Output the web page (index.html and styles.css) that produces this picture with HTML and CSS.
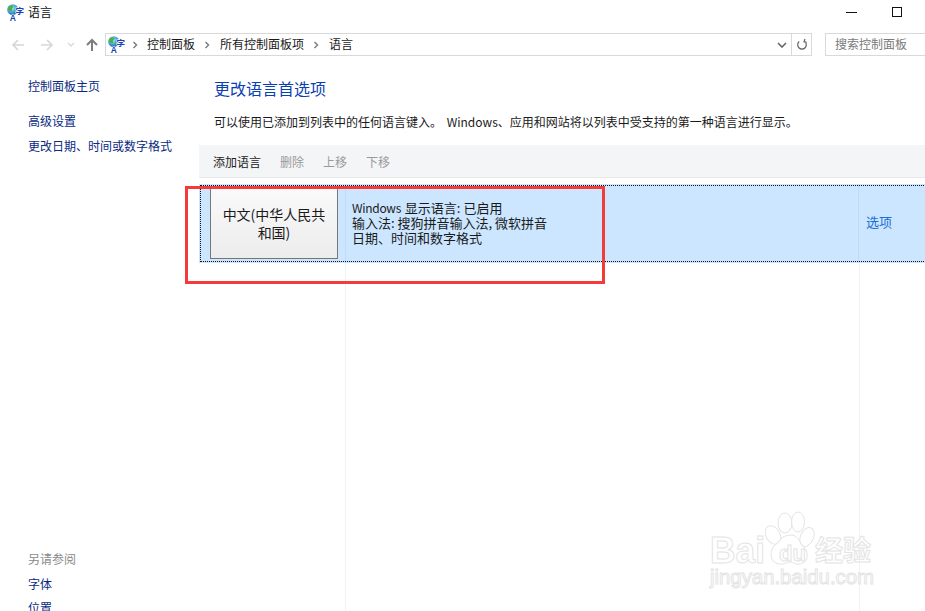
FILE: index.html
```html
<!DOCTYPE html>
<html lang="zh-CN">
<head>
<meta charset="utf-8">
<title>语言</title>
<link rel="stylesheet" href="styles.css">
</head>
<body>
<svg class="defs" width="0" height="0" aria-hidden="true">
  <defs>
    <radialGradient id="globe" cx="40%" cy="35%" r="70%">
      <stop offset="0" stop-color="#c4f0f7"/>
      <stop offset="0.55" stop-color="#45a5dc"/>
      <stop offset="1" stop-color="#17579f"/>
    </radialGradient>
    <symbol id="lang" viewBox="0 0 17 17">
      <circle cx="5.700" cy="5.700" r="5.500" fill="url(#globe)"/>
      <path d="M2.500 1.700c1.700-.9 3.300-.6 4 .4.400 1-.8 1.300-1.300 2.300-.5 1.100.5 1.700-.3 2.700C3.900 7.800 1.700 7 .8 5.300c.1-1.400.7-2.700 1.700-3.600zM7.500 5.500c1.100-.4 2.300 0 3.300.6-.2 1.400-.8 2.600-1.900 3.400-.9-1-2-2.800-1.400-4z" fill="#4fae4a"/>
      <text class="ico-zi" x="8.600" y="9.800">字</text>
      <text class="ico-a" x="2.700" y="16.800">A</text>
    </symbol>
  </defs>
</svg>

<header class="titlebar">
  <div class="title">
    <svg class="appicon"><use href="#lang"/></svg>
    <span>语言</span>
  </div>
  <div class="winctl">
    <span class="winbtn"><i class="min"></i></span>
    <span class="winbtn"><i class="max"></i></span>
  </div>
</header>

<nav class="navbar">
  <svg class="nav-ico off" viewBox="0 0 14 14"><path d="M13 7H2M7 2 2 7l5 5" fill="none" stroke="currentColor" stroke-width="1.600"/></svg>
  <svg class="nav-ico off gap" viewBox="0 0 14 14"><path d="M1 7h11M7 2l5 5-5 5" fill="none" stroke="currentColor" stroke-width="1.600"/></svg>
  <svg class="nav-caret off" viewBox="0 0 8 5"><path d="M1 1l3 3 3-3" fill="none" stroke="currentColor" stroke-width="1.200"/></svg>
  <svg class="nav-ico up" viewBox="0 0 14 14"><path d="M7 13V2M2 7l5-5 5 5" fill="none" stroke="currentColor" stroke-width="2"/></svg>
  <div class="address">
    <svg class="addr-icon"><use href="#lang"/></svg>
    <svg class="crumb-sep first" viewBox="0 0 6 8"><path d="M1.500 1l3 3-3 3" fill="none" stroke="currentColor" stroke-width="1.500"/></svg>
    <span class="crumb">控制面板</span>
    <svg class="crumb-sep" viewBox="0 0 6 8"><path d="M1.500 1l3 3-3 3" fill="none" stroke="currentColor" stroke-width="1.500"/></svg>
    <span class="crumb">所有控制面板项</span>
    <svg class="crumb-sep" viewBox="0 0 6 8"><path d="M1.500 1l3 3-3 3" fill="none" stroke="currentColor" stroke-width="1.500"/></svg>
    <span class="crumb">语言</span>
    <svg class="addr-drop" viewBox="0 0 10 6"><path d="M1 1l4 4 4-4" fill="none" stroke="currentColor" stroke-width="1.600"/></svg>
    <span class="addr-refresh">
      <svg viewBox="0 0 12 13"><path d="M3.200 3.500A4.300 4.300 0 1 0 8.800 3.500M9 1 8 3.800l2.800.6" fill="none" stroke="currentColor" stroke-width="1.200"/></svg>
    </span>
  </div>
  <div class="search"><span>搜索控制面板</span></div>
</nav>

<div class="body">
  <aside class="sidebar">
    <div class="side-top">
      <a class="home">控制面板主页</a>
      <a class="slink">高级设置</a>
      <a class="slink">更改日期、时间或数字格式</a>
    </div>
    <div class="side-bottom">
      <div class="seealso">另请参阅</div>
      <a class="slink">字体</a>
      <a class="slink">位置</a>
    </div>
  </aside>
  <main class="content">
    <h1>更改语言首选项</h1>
    <p class="desc">可以使用已添加到列表中的任何语言键入。 Windows、应用和网站将以列表中受支持的第一种语言进行显示。</p>
    <div class="toolbar">
      <span class="tool">添加语言</span>
      <span class="tool dis">删除</span>
      <span class="tool dis">上移</span>
      <span class="tool dis">下移</span>
    </div>
    <div class="listing">
      <div class="row">
        <div class="lang-cell"><div class="lang-btn">中文(中华人民共和国)</div></div>
        <div class="info">
          <div><span class="latin">Windows </span>显示语言: 已启用</div>
          <div>输入法: 搜狗拼音输入法, 微软拼音</div>
          <div>日期、时间和数字格式</div>
        </div>
        <div class="opt">选项</div>
      </div>
      <div class="guides"><span class="g1"></span><span class="g2"></span></div>
    </div>
  </main>
</div>

<div class="redbox"></div>

<svg class="watermark" viewBox="0 0 185 95" aria-hidden="true">
  <g class="wm-lines">
    <ellipse cx="73" cy="30" rx="7" ry="10" transform="rotate(-30 73 30)"/>
    <ellipse cx="85" cy="18" rx="7" ry="10"/>
    <ellipse cx="98" cy="17" rx="6.500" ry="10"/>
    <ellipse cx="107" cy="32" rx="6.500" ry="10" transform="rotate(25 107 32)"/>
    <path d="M91 30c6 0 8 6 12 11 6 6 6 16-3 18-6 1-6-2-10-2s-6 3-11 2c-9-1-10-12-5-18 5-5 8-11 17-11z"/>
    <text class="wm-big" x="10" y="58" textLength="55" lengthAdjust="spacingAndGlyphs">Bai</text>
    <text class="wm-du" x="79" y="56">du</text>
    <text class="wm-cn" x="115" y="56">经验</text>
    <text class="wm-url" x="10" y="79" textLength="164" lengthAdjust="spacingAndGlyphs">jingyan.baidu.com</text>
  </g>
</svg>
</body>
</html>
```

FILE: styles.css
```css
* { box-sizing: border-box; }
html, body { margin: 0; height: 100%; }
body {
  width: 925px; height: 611px; overflow: hidden; position: relative;
  background: #fff; color: #1a1a1a;
  font: 12px/16px "Noto Sans CJK SC", "Noto Sans", sans-serif;
}
.defs { position: absolute; }
.ico-zi, .ico-a { fill: #1a3fb5; paint-order: stroke; stroke: #fff; stroke-width: 1.200px; }
.ico-zi { font: 700 8.500px "Noto Sans CJK SC", sans-serif; }
.ico-a { font: 700 8.500px "Liberation Sans", sans-serif; }

.titlebar { display: flex; justify-content: space-between; height: 30px; }
.title { display: flex; align-items: flex-start; padding: 4px 0 0 7px; gap: 4px; }
.title span { line-height: 16px; color: #111; }
.appicon { width: 17px; height: 17px; }
.winctl { display: flex; }
.winbtn { width: 46px; height: 24px; display: flex; align-items: center; justify-content: center; }
.min { width: 11px; height: 1px; background: #111; margin-top: 1px; margin-left: -9px; }
.max { width: 10px; height: 10px; border: 1px solid #111; margin-left: -11px; }

.navbar { display: flex; align-items: center; height: 23px; margin-top: 3px; padding-left: 11px; }
.nav-ico { width: 14px; height: 14px; flex: none; }
.off { color: #d6d6d6; }
.gap { margin-left: 15px; }
.nav-caret { width: 8px; height: 5px; margin: 0 11px 0 13px; flex: none; }
.up { color: #7d7d7d; margin-right: 6px; margin-left: -1px; }
.address {
  display: flex; align-items: center; width: 707px; height: 23px; flex: none;
  border: 1px solid #d9d9d9; padding-left: 2px; color: #1a1a1a;
}
.addr-icon { width: 17px; height: 17px; flex: none; }
.crumb-sep { width: 6px; height: 8px; color: #808080; flex: none; margin: 0 10px 0 9px; }
.crumb-sep.first { margin: 0 9px 0 7px; }
.crumb { margin-top: -2px; }
.addr-drop { width: 10px; height: 6px; margin-left: auto; margin-right: 4px; color: #666; flex: none; }
.addr-refresh {
  width: 20px; height: 21px; border-left: 1px solid #d9d9d9; display: flex;
  align-items: center; justify-content: center; color: #666; flex: none;
}
.addr-refresh svg { width: 12px; height: 13px; }
.search {
  width: 100px; height: 23px; flex: none; margin-left: 13px; border: 1px solid #d9d9d9;
  border-right: 0; padding-left: 9px; line-height: 19px; color: #7a7a7a;
}

.body { display: flex; height: 555px; }
.sidebar {
  width: 199px; flex: none; padding: 22px 0 0 28px; display: flex; flex-direction: column;
  justify-content: space-between; height: 555px;
}
.sidebar a { display: block; color: #0a2a82; }
.side-top .home { margin-bottom: 19px; }
.side-top .slink { margin-bottom: 9px; }
.side-bottom { height: 60px; overflow: hidden; }
.seealso { color: #8a8a8a; margin-bottom: 9px; }
.side-bottom .slink { margin-bottom: 8px; }

.content { flex: 1; min-width: 0; }
h1 {
  margin: 21px 0 0 15px; font-size: 16px; line-height: 22px; font-weight: 400; color: #0a3fb0;
}
.desc { margin: 15px 0 0 15px; line-height: 16px; white-space: nowrap; color: #1a1a1a; word-spacing: 2px; }
.toolbar {
  display: flex; align-items: center; gap: 19px; height: 33px; margin-top: 15px;
  padding: 2px 0 0 14px; background: #f4f5f7; border-bottom: 1px solid #e8e8e8;
}
.tool { color: #222; }
.tool.dis { color: #9a9a9a; }
.listing { position: relative; margin-top: 6px; height: 427px; }
.row {
  display: flex; height: 79px; width: calc(100% + 10px); background: #cce6ff; position: relative;
  outline: 1px dotted #111; outline-offset: -2px; font-size: 13px;
}
.lang-cell { width: 146px; flex: none; padding: 3px 0 0 11px; }
.lang-btn {
  width: 128px; height: 72px; border: 1px solid #777; padding: 0 10px; font-size: 14px;
  display: flex; align-items: center; text-align: center; line-height: 18px; color: #1a1a1a;
  background: linear-gradient(#fafafa, #ececec);
}
.info {
  flex: none; width: 514px; padding: 16px 0 0 6px; line-height: 15px; color: #1a1a1a;
  border-left: 1px solid #bcdcf7; border-right: 1px solid #bcdcf7; white-space: nowrap;
}
.latin { font-size: 12px; letter-spacing: -.3px; margin-right: 1.500px; }
.opt { padding: 30px 0 0 7px; color: #1a6fd6; }
.guides { position: absolute; inset: 79px 0 0 0; }
.guides span { position: absolute; top: 0; bottom: 0; width: 1px; background: #eef3f9; }
.g1 { left: 146px; }
.g2 { left: 660px; }

.redbox {
  position: absolute; left: 185px; top: 186px; width: 420px; height: 98px;
  border: 3px solid #f53a3a;
}
.watermark { position: absolute; left: 700px; top: 505px; width: 185px; height: 95px; }
.wm-lines { fill: rgba(255,255,255,.55); stroke: #e4e4e4; stroke-width: 1; }
.wm-big { font: 700 37px "Liberation Sans", sans-serif; }
.wm-du { font: 700 22px "Liberation Sans", sans-serif; }
.wm-cn { font: 700 28px "Noto Sans CJK SC", sans-serif; }
.wm-url { font: 400 21px "Liberation Sans", sans-serif; }
```
